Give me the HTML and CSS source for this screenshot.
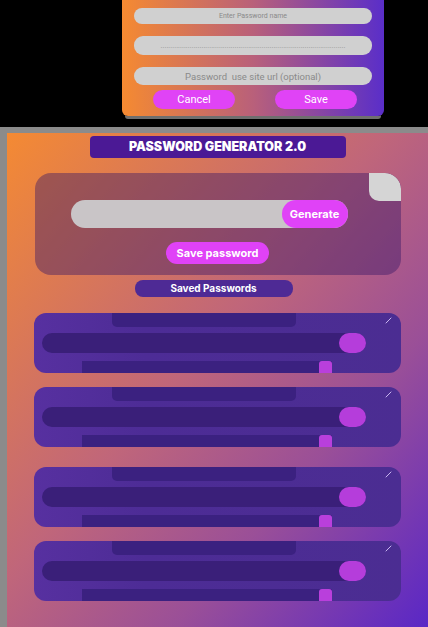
FILE: index.html
```html
<!DOCTYPE html>
<html lang="en">
<head>
  <meta charset="UTF-8" />
  <meta name="viewport" content="width=device-width, initial-scale=1.0"/>
  <title>Password Generator 2.0</title>
  <link rel="stylesheet" href="styles.css">
</head>
<body>
  <div class="modal">
    <input class="modal-input small" type="text" placeholder="Enter Password name">
    <input class="modal-input dots" type="text" placeholder="...............................................................................................">
    <input class="modal-input url" type="text" placeholder="Password  use site url (optional)">
    <div class="modal-actions">
      <button class="pill-btn">Cancel</button>
      <button class="pill-btn">Save</button>
    </div>
  </div>

  <div class="screen">
    <div class="panel">
      <h1 class="title">PASSWORD GENERATOR 2.0</h1>

      <div class="generator">
        <div class="corner"></div>
        <div class="gen-row">
          <input class="gen-input" type="text">
          <button class="gen-btn">Generate</button>
        </div>
        <button class="save-btn">Save password</button>
      </div>

      <div class="saved-label">Saved Passwords</div>

      <div class="saved-list">
        <div class="saved-card">
          <svg class="edit" width="7" height="7" viewBox="0 0 7 7"><path d="M1 6 L6 1" stroke="#c9b8f0" stroke-width="1" stroke-linecap="round"/></svg>
          <div class="bar-top"></div>
          <div class="bar-mid"><span class="knob"></span></div>
          <div class="bar-bottom"><span class="chip"></span></div>
        </div>
        <div class="saved-card">
          <svg class="edit" width="7" height="7" viewBox="0 0 7 7"><path d="M1 6 L6 1" stroke="#c9b8f0" stroke-width="1" stroke-linecap="round"/></svg>
          <div class="bar-top"></div>
          <div class="bar-mid"><span class="knob"></span></div>
          <div class="bar-bottom"><span class="chip"></span></div>
        </div>
        <div class="saved-card">
          <svg class="edit" width="7" height="7" viewBox="0 0 7 7"><path d="M1 6 L6 1" stroke="#c9b8f0" stroke-width="1" stroke-linecap="round"/></svg>
          <div class="bar-top"></div>
          <div class="bar-mid"><span class="knob"></span></div>
          <div class="bar-bottom"><span class="chip"></span></div>
        </div>
        <div class="saved-card">
          <svg class="edit" width="7" height="7" viewBox="0 0 7 7"><path d="M1 6 L6 1" stroke="#c9b8f0" stroke-width="1" stroke-linecap="round"/></svg>
          <div class="bar-top"></div>
          <div class="bar-mid"><span class="knob"></span></div>
          <div class="bar-bottom"><span class="chip"></span></div>
        </div>
      </div>
    </div>
  </div>
</body>
</html>
```

FILE: styles.css
```css
body {
  margin: 0;
  background: #000;
  font-family: Roboto, "Liberation Sans", sans-serif;
  overflow: hidden;
}

/* Add-password modal */
.modal {
  margin-left: 122px;
  width: 262px;
  height: 116px;
  box-sizing: border-box;
  padding: 8px 12px 0 12px;
  background: linear-gradient(to right, #f58a31, #b9607a 50%, #5a2ec9);
  border-radius: 0 0 6px 6px;
  box-shadow: 0 6px 0 -3px #6f6f6f;
  display: flex;
  flex-direction: column;
}
.modal-input {
  display: block;
  width: 238px;
  height: 17px;
  margin: 0 0 11px 0;
  padding: 0 10px;
  box-sizing: border-box;
  border: none;
  outline: none;
  border-radius: 9px;
  background: #d0d0d0;
  font-family: Roboto, "Liberation Sans", sans-serif;
  font-size: 9px;
  text-align: center;
  color: #888;
}
.modal-input::placeholder {
  color: #8a8a8a;
}
.modal-input.small {
  height: 16px;
  margin-bottom: 12px;
  font-size: 7px;
}
.modal-input.dots {
  height: 19px;
  margin-bottom: 12px;
  font-size: 7px;
  letter-spacing: 0.1px;
}
.modal-input.dots::placeholder {
  color: #8e8e8e;
}
.modal-input.url {
  height: 18px;
  margin-bottom: 5px;
  font-size: 9.5px;
}
.modal-actions {
  display: flex;
  justify-content: space-between;
  padding: 0 15px 0 19px;
}
.pill-btn {
  width: 82px;
  height: 19px;
  border: none;
  border-radius: 10px;
  background: #e043f6;
  color: #fff;
  font-family: Roboto, "Liberation Sans", sans-serif;
  font-size: 11px;
  font-weight: 400;
  padding: 0;
}

/* Main screen */
.screen {
  margin-top: 11px;
  padding: 6px 0 0 7px;
  background: #8b8b8b;
  height: 500px;
}
.panel {
  height: 494px;
  background: linear-gradient(to bottom right, #f48a33 0%, #c0667a 45%, #9a4f98 70%, #5a27c6 100%);
  display: flex;
  flex-direction: column;
  align-items: center;
  padding-top: 3px;
  box-sizing: border-box;
}
.title {
  margin: 0;
  width: 256px;
  height: 22px;
  background: #4b1995;
  border-radius: 4px;
  color: #fff;
  font-family: Inter, "Liberation Sans", sans-serif;
  font-size: 12.5px;
  font-weight: 900;
  line-height: 22px;
  text-align: center;
}

.generator {
  position: relative;
  width: 366px;
  height: 102px;
  margin-top: 15px;
  border-radius: 16px;
  background: rgba(52, 22, 102, 0.42);
  display: flex;
  flex-direction: column;
  align-items: center;
  padding-top: 27px;
  box-sizing: border-box;
  overflow: hidden;
}
.corner {
  position: absolute;
  top: 0;
  right: 0;
  width: 32px;
  height: 28px;
  background: #d5d5d5;
  border-radius: 0 16px 0 10px;
}
.gen-row {
  display: flex;
  width: 277px;
  height: 28px;
  align-self: flex-start;
  margin-left: 36px;
  border-radius: 14px;
  background: #c9c5c7;
}
.gen-input {
  flex: 1;
  border: none;
  outline: none;
  background: transparent;
  min-width: 0;
}
.gen-btn {
  width: 66px;
  height: 28px;
  border: none;
  border-radius: 14px;
  background: #e042f7;
  color: #fff;
  font-family: Inter, "Liberation Sans", sans-serif;
  font-size: 11px;
  font-weight: 700;
  padding: 0;
}
.save-btn {
  margin-top: 14px;
  width: 103px;
  height: 22px;
  border: none;
  border-radius: 11px;
  background: #e042f7;
  color: #fff;
  font-family: Inter, "Liberation Sans", sans-serif;
  font-size: 11px;
  font-weight: 700;
  padding: 0;
}

.saved-label {
  margin-top: 5px;
  margin-right: 8px;
  width: 158px;
  height: 17px;
  border-radius: 8px;
  background: #4e2a95;
  color: #fff;
  font-family: Inter, "Liberation Sans", sans-serif;
  font-size: 10px;
  font-weight: 700;
  line-height: 17px;
  text-align: center;
}

.saved-list {
  margin-top: 16px;
  display: flex;
  flex-direction: column;
  gap: 14px;
}
.saved-card {
  position: relative;
  width: 367px;
  height: 60px;
  border-radius: 12px;
  background: linear-gradient(to right, #5730a0, #4d2c96 30%, #4b2d92);
  overflow: hidden;
  display: flex;
  flex-direction: column;
}
.saved-card:nth-child(3) {
  margin-top: 6px;
}
.edit {
  position: absolute;
  top: 4px;
  right: 9px;
}
.bar-top {
  margin-left: 78px;
  width: 184px;
  height: 14px;
  border-radius: 0 0 5px 5px;
  background: #3b2180;
}
.bar-mid {
  margin: 6px 0 0 8px;
  width: 324px;
  height: 20px;
  border-radius: 10px;
  background: #3a1f79;
  display: flex;
  justify-content: flex-end;
}
.knob {
  width: 27px;
  height: 20px;
  border-radius: 10px;
  background: #b53ddb;
}
.bar-bottom {
  margin: 8px 0 0 48px;
  width: 250px;
  height: 12px;
  background: #3b2180;
  display: flex;
  justify-content: flex-end;
}
.chip {
  width: 13px;
  height: 12px;
  border-radius: 3px 3px 0 0;
  background: #b93fdc;
}
```
